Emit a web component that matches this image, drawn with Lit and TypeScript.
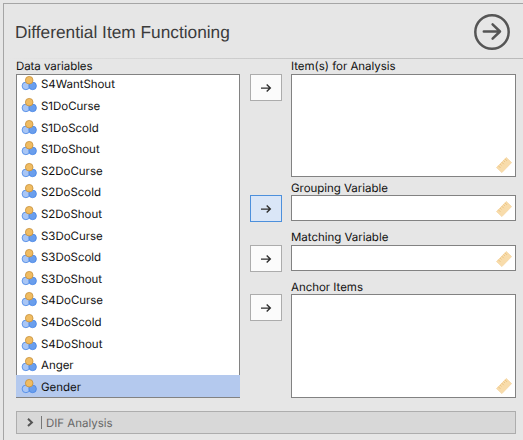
import { LitElement, html, css } from "lit";
import { customElement, property } from "lit/decorators.js";

const VARIABLES = [
  "S4WantShout", "S1DoCurse", "S1DoScold", "S1DoShout", "S2DoCurse",
  "S2DoScold", "S2DoShout", "S3DoCurse", "S3DoScold", "S3DoShout",
  "S4DoCurse", "S4DoScold", "S4DoShout", "Anger", "Gender",
];

const nominalIcon = html`
  <svg width="16" height="16" viewBox="0 0 16 16">
    <circle cx="4.9" cy="10.9" r="3.8" fill="#a9c6f5" stroke="#4685e6" stroke-width="0.8" />
    <circle cx="11.6" cy="10.9" r="3.8" fill="#6a9eec" stroke="#4685e6" stroke-width="0.8" />
    <circle cx="8.2" cy="5.2" r="3.8" fill="#f0bc62" stroke="#c78f38" stroke-width="0.8" />
  </svg>`;

const rulerIcon = html`
  <svg width="16" height="16" viewBox="0 0 16 16">
    <path d="M0.5 10.6 L10.3 0.5 L15.6 5.6 L5.9 15.6 Z" fill="#f8dcab" stroke="#f5d39c" stroke-width="0.7" />
    <path d="M2.4 8.8 l2 2 M4.1 7 l1.4 1.4 M5.8 5.2 l2 2 M7.5 3.5 l1.4 1.4 M9 1.9 l2 2" stroke="#e6bd78" stroke-width="0.8" />
  </svg>`;

@customElement("assign-button")
export class AssignButton extends LitElement {
  @property({ type: Boolean, reflect: true }) active = false;

  static styles = css`
    :host { display: block; width: 32px; height: 27px; }
    .button {
      display: flex; align-items: center; justify-content: center;
      box-sizing: border-box; width: 32px; height: 27px; padding: 0;
      background: #fbfbfb; border: 1px solid #acacac; border-radius: 0;
    }
    :host([active]) .button { background: #dae6f7; border-color: #4d90dc; }
    svg { display: block; }
  `;

  render() {
    return html`<button class="button" aria-label="Assign">
      <svg width="12" height="11" viewBox="0 0 12 11" fill="none" stroke="#2e2e2e" stroke-width="1.4">
        <path d="M1 6.1 H10.2 M6.7 2.6 L10.3 6.1 L6.7 9.6" />
      </svg>
    </button>`;
  }
}

@customElement("drop-target")
export class DropTarget extends LitElement {
  @property() label = "";

  static styles = css`
    :host { display: flex; flex-direction: column; min-height: 0; }
    .label {
      box-sizing: border-box; height: 15px; line-height: 15px; white-space: nowrap;
      padding-top: var(--label-drop, 0px);
    }
    .box {
      flex: 1; box-sizing: border-box; display: flex;
      align-items: flex-end; justify-content: flex-end;
      padding: 0 3px 3px 0; background: #fff; border: 1px solid #828282;
    }
    svg { display: block; }
  `;

  render() {
    return html`<div class="label">${this.label}</div><div class="box">${rulerIcon}</div>`;
  }
}

@customElement("app-root")
export class AppRoot extends LitElement {
  static styles = css`
    :host {
      display: block; box-sizing: border-box; width: 523px; height: 440px;
      padding: 3px 0 0 3px; overflow: hidden; background: #e6e6e6; color: #101010;
      font-family: Inter, "Liberation Sans", sans-serif; font-size: 11.5px;
      letter-spacing: -0.03px; text-rendering: geometricPrecision;
    }
    .panel {
      box-sizing: border-box; height: 437px;
      border: solid #a5a5a5; border-width: 1px 0 0 1px;
    }
    .header {
      display: flex; align-items: center; justify-content: space-between;
      box-sizing: border-box; height: 54px; padding: 2px 13px 0 11px;
    }
    .title {
      margin: 0; font: 400 17.3px "Liberation Sans", sans-serif;
      letter-spacing: 0; color: #3b3b3b;
    }
    .run { display: block; }
    .divider { height: 1px; background: linear-gradient(90deg, #e6e6e6 0, #c4c4c4 60%, #bababa 100%); }
    .main {
      display: grid; grid-template-columns: 224px 32px 225px;
      column-gap: 10px; height: 339px; padding-left: 12px;
    }
    .label { height: 15px; line-height: 15px; letter-spacing: -0.07px; }
    .list {
      box-sizing: border-box; height: 324px; margin: 0; padding: 0;
      list-style: none; background: #fff; border: 1px solid #828282;
      display: flex; flex-direction: column; justify-content: flex-end;
    }
    .row {
      display: flex; align-items: center; gap: 4px; flex: none;
      box-sizing: border-box; height: 21.6px; padding: 1px 0 0 4px;
    }
    .row svg { display: block; margin-top: -2px; }
    .row:first-child { margin-top: -2px; }
    .selected { margin: 0 -1px; padding-left: 5px; background: #b4c9ee; }
    .buttons { display: grid; grid-template-rows: 121px 50px 49px 27px; padding-top: 15px; }
    .targets {
      display: grid; grid-template-rows: 121px 50px 49px 119px;
      width: 225px; margin-left: -1px;
    }
    .targets > * { align-self: start; height: 41px; }
    .targets > .large { height: 118px; }
    .targets > .last { height: 119px; }
    .low { --label-drop: 1px; }
    .options {
      display: flex; align-items: center; box-sizing: border-box;
      width: 500px; height: 23px; margin: 13px 0 0 12px; padding-left: 10px;
      background: #d8d8d8; border: 1px solid #adadad; color: #676767;
    }
    .bar { width: 1px; height: 13px; margin: 0 4px 0 7px; background: #777; }
  `;

  render() {
    return html`<section class="panel">
      <header class="header">
        <h1 class="title">Differential Item Functioning</h1>
        <svg class="run" width="36" height="36" viewBox="0 0 36 36" fill="none" stroke="#555" stroke-width="2.5">
          <circle cx="18" cy="18" r="16.7" />
          <path d="M9.8 17.5 H26 M18.6 10.4 L26 17.5 L18.6 24.7" stroke-linecap="round" stroke-linejoin="round" />
        </svg>
      </header>
      <div class="divider"></div>
      <div class="main">
        <div class="source">
          <div class="label">Data variables</div>
          <ul class="list">
            ${VARIABLES.map((name) => html`<li class="row ${name === "Gender" ? "selected" : ""}">${nominalIcon}<span>${name}</span></li>`)}
          </ul>
        </div>
        <div class="buttons">
          <assign-button></assign-button>
          <assign-button active></assign-button>
          <assign-button></assign-button>
          <assign-button></assign-button>
        </div>
        <div class="targets">
          <drop-target class="large" label="Item(s) for Analysis"></drop-target>
          <drop-target class="low" label="Grouping Variable"></drop-target>
          <drop-target label="Matching Variable"></drop-target>
          <drop-target class="last low" label="Anchor Items"></drop-target>
        </div>
      </div>
      <div class="options">
        <svg width="7" height="9" viewBox="0 0 7 9" fill="none" stroke="#555" stroke-width="2"><path d="M1 0.8 L4.9 4.4 L1 8" /></svg>
        <span class="bar"></span><span>DIF Analysis</span>
      </div>
    </section>`;
  }
}
